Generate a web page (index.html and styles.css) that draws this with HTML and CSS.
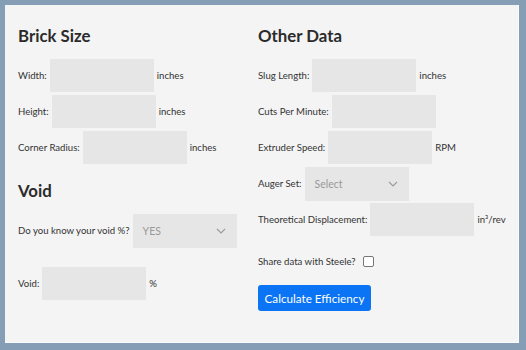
FILE: index.html
```html
<!DOCTYPE html>
<html lang="en">
<head>
    <meta charset="UTF-8">
    <meta name="viewport" content="width=device-width, initial-scale=1.0">
    <title>Efficiency Calculator</title>
    <link rel="stylesheet" href="styles.css">
</head>
<body>
    <div class="panel">
        <div class="column">
            <h2>Brick Size</h2>
            <div class="row"><label for="width">Width:</label><input type="text" id="width" class="field"><span class="unit">inches</span></div>
            <div class="row"><label for="height">Height:</label><input type="text" id="height" class="field"><span class="unit">inches</span></div>
            <div class="row"><label for="radius">Corner Radius:</label><input type="text" id="radius" class="field"><span class="unit">inches</span></div>

            <h2 class="void-title">Void</h2>
            <div class="row">
                <label for="know-void">Do you know your void %?</label>
                <div class="select">
                    <span>YES</span>
                    <svg width="10" height="6" viewBox="0 0 10 6"><path d="M1 1l4 4 4-4" fill="none" stroke="#9a9a9a" stroke-width="1.1"/></svg>
                </div>
            </div>
            <div class="row void-row"><label for="void">Void:</label><input type="text" id="void" class="field"><span class="unit">%</span></div>
        </div>

        <div class="column">
            <h2>Other Data</h2>
            <div class="row"><label for="slug">Slug Length:</label><input type="text" id="slug" class="field"><span class="unit">inches</span></div>
            <div class="row"><label for="cuts">Cuts Per Minute:</label><input type="text" id="cuts" class="field"></div>
            <div class="row"><label for="speed">Extruder Speed:</label><input type="text" id="speed" class="field"><span class="unit">RPM</span></div>
            <div class="row">
                <label for="auger">Auger Set:</label>
                <div class="select">
                    <span>Select</span>
                    <svg width="10" height="6" viewBox="0 0 10 6"><path d="M1 1l4 4 4-4" fill="none" stroke="#9a9a9a" stroke-width="1.1"/></svg>
                </div>
            </div>
            <div class="row"><label for="disp">Theoretical Displacement:</label><input type="text" id="disp" class="field"><span class="unit">in³/rev</span></div>
            <div class="share"><label for="share">Share data with Steele?</label><span class="check"></span></div>
            <button class="calc">Calculate Efficiency</button>
        </div>
    </div>
</body>
</html>
```

FILE: styles.css
```css
body {
    margin: 0;
    padding: 5px 7px 7px 5px;
    background-color: #869db6;
    font-family: Lato, "Open Sans", sans-serif;
    color: #333;
}

.panel {
    box-sizing: border-box;
    width: 514px;
    height: 338px;
    background-color: #f4f4f4;
    border-right: 1px solid #fbfbfb;
    border-bottom: 1px solid #fbfbfb;
    padding: 20px 0 0 13px;
    display: grid;
    grid-template-columns: 240px 1fr;
}

h2 {
    margin: 0 0 12px 0;
    font-size: 16.8px;
    font-weight: bold;
    line-height: 22px;
    color: #2b2b2b;
}

.void-title {
    margin-top: 16px;
}

.row {
    display: flex;
    align-items: center;
    height: 33px;
    margin-bottom: 3px;
    font-size: 9.6px;
    white-space: nowrap;
}

.row label {
    margin-right: 3px;
}

.field {
    box-sizing: border-box;
    width: 104px;
    height: 33px;
    border: none;
    background-color: #e6e6e6;
    margin: 0;
    padding: 0;
    flex-shrink: 0;
}

.unit {
    margin-left: 3px;
}

.select {
    box-sizing: border-box;
    width: 104px;
    height: 34px;
    flex-shrink: 0;
    background-color: #e6e6e6;
    display: flex;
    align-items: center;
    justify-content: space-between;
    padding: 0 11px 0 10px;
    color: #999;
    font-size: 10.5px;
}

.select svg {
    margin-top: 1px;
}

.void-row {
    margin-top: 20px;
}

.share {
    display: flex;
    align-items: center;
    margin-top: 17px;
    height: 16px;
    font-size: 9.6px;
}

.check {
    box-sizing: border-box;
    width: 11px;
    height: 11px;
    margin-left: 7px;
    border: 1px solid #767676;
    border-radius: 2px;
    background-color: #fff;
}

.calc {
    display: block;
    margin-top: 16px;
    width: 113px;
    height: 26px;
    border: none;
    border-radius: 3px;
    background-color: #0a74f5;
    color: #fff;
    font-family: Lato, "Open Sans", sans-serif;
    font-size: 11.7px;
    padding: 0;
    cursor: pointer;
}
```
